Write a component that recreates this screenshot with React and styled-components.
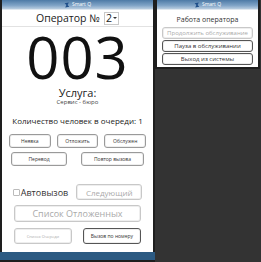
import styled, { createGlobalStyle } from "styled-components";

const GlobalStyle = createGlobalStyle`
  html, body {
    margin: 0;
    padding: 0;
    background: #333333;
  }
  body {
    font-family: "Open Sans", "Liberation Sans", sans-serif;
    color: #222;
  }
`

const Desktop = styled.div`
  display: flex;
  align-items: flex-start;
  width: 261px;
  height: 262px;
  overflow: hidden;
  background: #333333;
`

const Window = styled.div`
  display: flex;
  flex-direction: column;
  box-sizing: border-box;
  width: ${p => p.$width}px;
  height: ${p => p.$height}px;
  background: #ffffff;
  border: 2px solid #1e1e1e;
  border-top: 0;
`

const TitleBar = styled.div`
  flex: none;
  height: 9px;
  display: flex;
  align-items: center;
  justify-content: center;
  gap: 2px;
  background: linear-gradient(#4d7aa6, #7fa3c6 60%, #b9cde0);
  border-bottom: 1px solid #dfe7ef;
  font-size: 5px;
  color: #ffffff;
  line-height: 1;
`

const Logo = styled.svg`
  width: 6px;
  height: 6px;
`

const Header = styled.div`
  flex: none;
  display: flex;
  justify-content: center;
  align-items: center;
  gap: 4px;
  height: 16px;
  border-bottom: 1px solid #e2e2e2;
  font-size: 10.5px;
  line-height: 12px;
`

const Select = styled.span`
  display: inline-flex;
  align-items: center;
  gap: 1px;
  padding: 0 1px;
  border: 1px solid #c8c8c8;
  font-size: 10.5px;
  line-height: 11px;
  &::after {
    content: "";
    border-left: 2px solid transparent;
    border-right: 2px solid transparent;
    border-top: 2px solid #333;
  }
`

const Body = styled.div`
  flex: 1;
  display: flex;
  flex-direction: column;
  align-items: center;
`

const Ticket = styled.div`
  margin-top: 1px;
  font-size: 58px;
  line-height: 58px;
  font-weight: 400;
  color: #111;
  letter-spacing: 1px;
`

const ServiceLabel = styled.div`
  margin-top: 1px;
  font-size: 11px;
  line-height: 11px;
`

const ServiceName = styled.div`
  font-size: 6px;
  line-height: 8px;
  color: #444;
`

const QueueInfo = styled.div`
  margin-top: 10px;
  font-size: 8px;
  line-height: 10px;
`

const ButtonRow = styled.div`
  display: flex;
  justify-content: ${p => p.$justify || "center"};
  gap: ${p => p.$gap}px;
  width: 100%;
  box-sizing: border-box;
  padding: 0 ${p => p.$pad}px;
  margin-top: ${p => p.$top}px;
  align-items: center;
`

const Button = styled.div`
  box-sizing: border-box;
  display: flex;
  align-items: center;
  justify-content: center;
  width: ${p => p.$w}px;
  height: ${p => p.$h || 14}px;
  border: 1px solid ${p => (p.$dark ? "#555" : "#9a9a9a")};
  border-radius: 3px;
  box-shadow: inset 0 0 0 1px #eeeeee;
  background: #ffffff;
  font-size: ${p => p.$fs || 5}px;
  color: ${p => (p.$muted ? "#aaaaaa" : "#333")};
  white-space: nowrap;
  ${p => p.$muted && "border-color: #c8c8c8;"}
`

const AutoCall = styled.label`
  display: flex;
  align-items: center;
  gap: 1px;
  font-size: 9px;
  color: #333;
`

const Check = styled.span`
  width: 7px;
  height: 7px;
  box-sizing: border-box;
  border: 1px solid #bbb;
  border-radius: 1px;
`

const StatusBar = styled.div`
  flex: none;
  height: 8px;
  background: #2c5a82;
  margin: 0 -2px;
`

const MenuTitle = styled.div`
  text-align: center;
  font-size: 7px;
  line-height: 9px;
  margin: 5px 0 3px;
  color: #333;
`

const MenuList = styled.div`
  display: flex;
  flex-direction: column;
  align-items: center;
  gap: 1px;
`

export default function App() {
  return (
    <>
      <GlobalStyle />
      <Desktop>
        <Window $width={155} $height={262}>
          <TitleBar>
            <Logo viewBox="0 0 10 10">
              <path d="M1 2 L8 1 L6 5 L9 8 L2 9 L4 5 Z" fill="#1f4f8a" />
            </Logo>
            Smart Q
          </TitleBar>
          <Header>
            Оператор №
            <Select>2</Select>
          </Header>
          <Body>
            <Ticket>003</Ticket>
            <ServiceLabel>Услуга:</ServiceLabel>
            <ServiceName>Сервис - бюро</ServiceName>
            <QueueInfo>Количество человек в очереди: 1</QueueInfo>
            <ButtonRow $gap={6} $pad={7} $top={8} $justify="space-between">
              <Button $w={44}>Неявка</Button>
              <Button $w={44}>Отложить</Button>
              <Button $w={44}>Обслужен</Button>
            </ButtonRow>
            <ButtonRow $gap={14} $pad={0} $top={4}>
              <Button $w={56}>Перевод</Button>
              <Button $w={63}>Повтор вызова</Button>
            </ButtonRow>
            <ButtonRow $gap={8} $pad={0} $top={18}>
              <AutoCall>
                <Check />
                Автовызов
              </AutoCall>
              <Button $w={66} $h={16} $fs={8} $muted>Следующий</Button>
            </ButtonRow>
            <ButtonRow $gap={0} $pad={0} $top={5}>
              <Button $w={127} $h={17} $fs={9} $muted>Список Отложенных</Button>
            </ButtonRow>
            <ButtonRow $gap={11} $pad={0} $top={6}>
              <Button $w={58} $h={16} $fs={4} $muted>Список Очереди</Button>
              <Button $w={58} $h={16} $fs={5} $dark>Вызов по номеру</Button>
            </ButtonRow>
          </Body>
          <StatusBar />
        </Window>
        <Window $width={105} $height={69}>
          <TitleBar>
            <Logo viewBox="0 0 10 10">
              <path d="M1 2 L8 1 L6 5 L9 8 L2 9 L4 5 Z" fill="#1f4f8a" />
            </Logo>
            Smart Q
          </TitleBar>
          <MenuTitle>Работа оператора</MenuTitle>
          <MenuList>
            <Button $w={91} $h={12} $fs={6} $muted>Продолжить обслуживание</Button>
            <Button $w={91} $h={12} $fs={6} $dark>Пауза в обслуживании</Button>
            <Button $w={91} $h={12} $fs={6} $dark>Выход из системы</Button>
          </MenuList>
        </Window>
      </Desktop>
    </>
  );
}
